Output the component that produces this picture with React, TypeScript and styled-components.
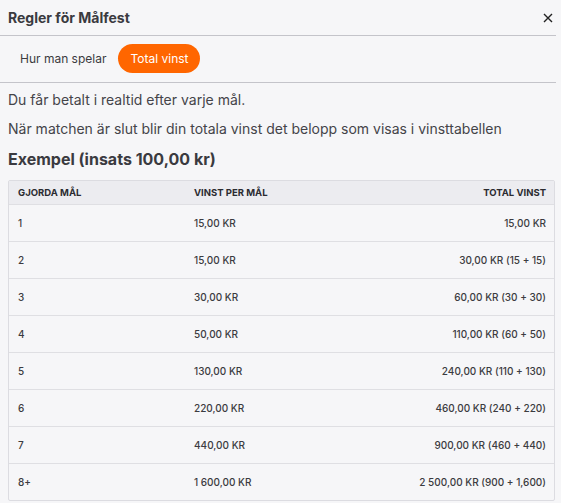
import React from "react";
import styled, { createGlobalStyle } from "styled-components";

const Global = createGlobalStyle`
  html, body { margin: 0; padding: 0; background: #f6f6f8; }
  body { font-family: Inter, "Noto Sans", sans-serif; color: #3b3b40; }
  * { box-sizing: border-box; }
`;

const Modal = styled.div`
  width: 556px;
  background: #f6f6f8;
`;

const Header = styled.div`
  display: flex;
  align-items: center;
  justify-content: space-between;
  height: 36px;
  padding: 0 2px 0 8px;
  border-bottom: 1px solid #c4c4ca;
`;

const Title = styled.h1`
  margin: 0;
  font-size: 14px;
  font-weight: 700;
  color: #3a3a40;
`;

const Close = styled.button`
  border: 0;
  background: transparent;
  padding: 0;
  display: flex;
  align-items: center;
  justify-content: center;
  width: 12px;
  height: 12px;
  cursor: pointer;
`;

const Tabs = styled.div`
  display: flex;
  align-items: center;
  padding: 8px 8px 9px;
  border-bottom: 1px solid #c4c4ca;
`;

const Tab = styled.button<{ $active?: boolean }>`
  border: 0;
  font-family: inherit;
  font-size: 12px;
  height: 29px;
  padding: 0 12px;
  border-radius: 15px;
  background: ${(p) => (p.$active ? "#ff6600" : "transparent")};
  color: ${(p) => (p.$active ? "#ffffff" : "#3b3b40")};
  cursor: pointer;
`;

const Body = styled.div`
  padding: 8px 1px 0 8px;
`;

const Para = styled.p`
  margin: 0 0 11px;
  font-size: 14px;
  line-height: 18px;
  color: #444449;
`;

const Heading = styled.h2`
  margin: 3px 0 11px;
  font-size: 16px;
  line-height: 20px;
  font-weight: 700;
  color: #3a3a40;
`;

const Table = styled.div`
  border: 1px solid #dcdce1;
  border-radius: 2px;
`;

const Row = styled.div<{ $head?: boolean }>`
  display: grid;
  grid-template-columns: 176px 1fr 1fr;
  align-items: center;
  height: ${(p) => (p.$head ? "23px" : "37px")};
  padding: 0 8px 0 9px;
  background: ${(p) => (p.$head ? "#ececf0" : "transparent")};
  border-top: ${(p) => (p.$head ? "0" : "1px solid #dfdfe3")};
  font-size: ${(p) => (p.$head ? "9.5px" : "10px")};
  font-weight: ${(p) => (p.$head ? 700 : 500)};
  color: ${(p) => (p.$head ? "#2b2b30" : "#3b3b40")};
`;

const Cell = styled.div<{ $right?: boolean }>`
  text-align: ${(p) => (p.$right ? "right" : "left")};
  white-space: nowrap;
`;

const rows: [string, string, string][] = [
  ["1", "15,00 KR", "15,00 KR"],
  ["2", "15,00 KR", "30,00 KR (15 + 15)"],
  ["3", "30,00 KR", "60,00 KR (30 + 30)"],
  ["4", "50,00 KR", "110,00 KR (60 + 50)"],
  ["5", "130,00 KR", "240,00 KR (110 + 130)"],
  ["6", "220,00 KR", "460,00 KR (240 + 220)"],
  ["7", "440,00 KR", "900,00 KR (460 + 440)"],
  ["8+", "1 600,00 KR", "2 500,00 KR (900 + 1,600)"],
];

export default function App() {
  return (
    <>
      <Global />
      <Modal>
        <Header>
          <Title>Regler för Målfest</Title>
          <Close aria-label="Stäng">
            <svg width="10" height="10" viewBox="0 0 10 10">
              <path d="M1 1L9 9M9 1L1 9" stroke="#222" strokeWidth="1.4" />
            </svg>
          </Close>
        </Header>
        <Tabs>
          <Tab>Hur man spelar</Tab>
          <Tab $active>Total vinst</Tab>
        </Tabs>
        <Body>
          <Para>Du får betalt i realtid efter varje mål.</Para>
          <Para>När matchen är slut blir din totala vinst det belopp som visas i vinsttabellen</Para>
          <Heading>Exempel (insats 100,00 kr)</Heading>
          <Table>
            <Row $head>
              <Cell>GJORDA MÅL</Cell>
              <Cell>VINST PER MÅL</Cell>
              <Cell $right>TOTAL VINST</Cell>
            </Row>
            {rows.map((r) => (
              <Row key={r[0]}>
                <Cell>{r[0]}</Cell>
                <Cell>{r[1]}</Cell>
                <Cell $right>{r[2]}</Cell>
              </Row>
            ))}
          </Table>
        </Body>
      </Modal>
    </>
  );
}
